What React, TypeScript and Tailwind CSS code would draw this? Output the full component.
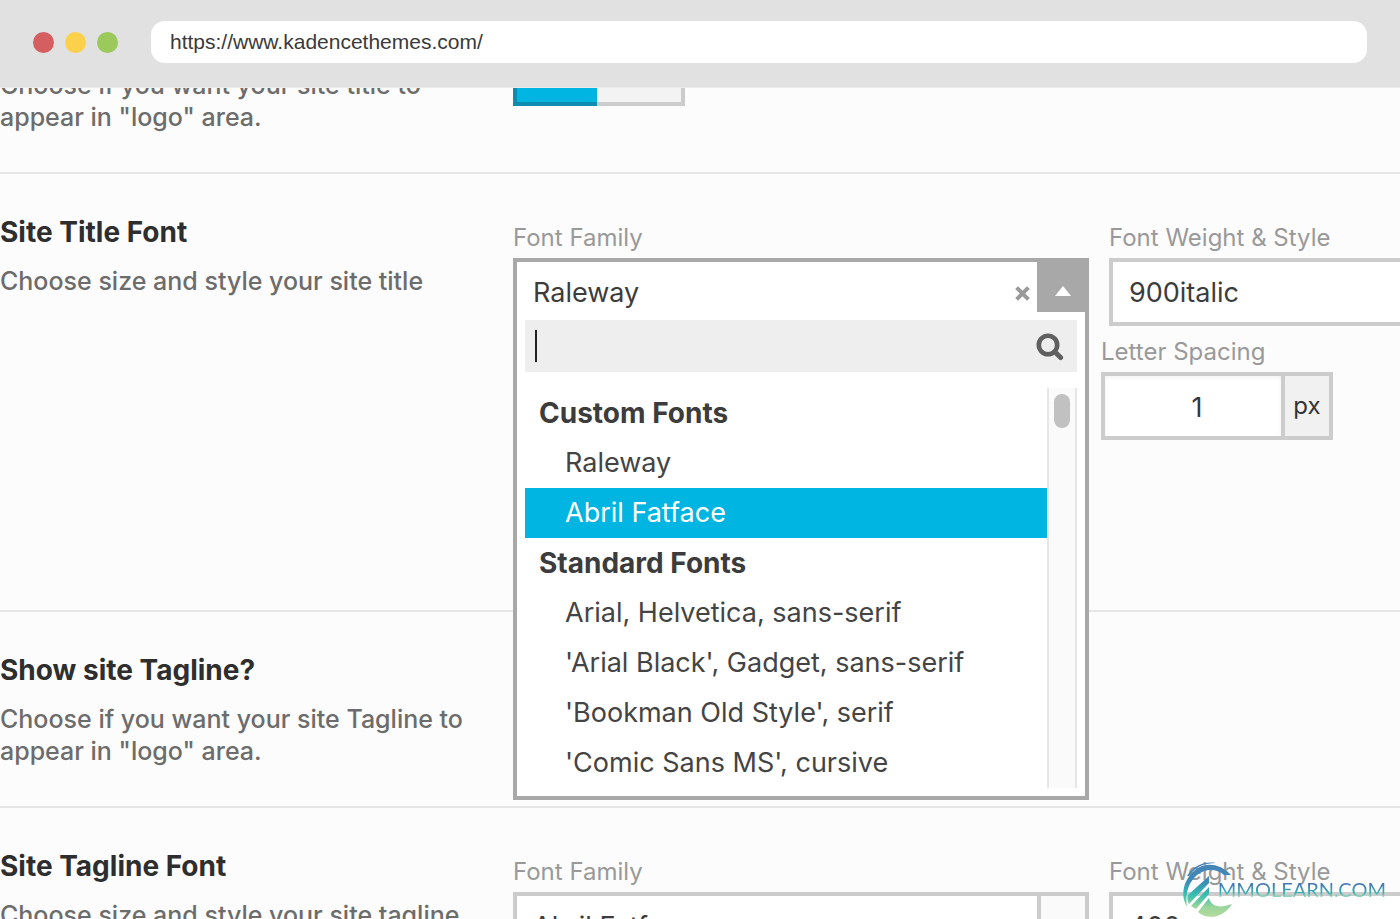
import React, { useState } from "react";
import type { ReactNode } from "react";

interface FontGroup {
    label: string;
    fonts: string[];
}

interface SettingRowProps {
    readonly title: string;
    readonly description: string;
    readonly className?: string;
    readonly children?: ReactNode;
}

const FONT_GROUPS: FontGroup[] = [
    { label: "Custom Fonts", fonts: ["Raleway", "Abril Fatface"] },
    {
        label: "Standard Fonts",
        fonts: [
            "Arial, Helvetica, sans-serif",
            "'Arial Black', Gadget, sans-serif",
            "'Bookman Old Style', serif",
            "'Comic Sans MS', cursive",
        ],
    },
];

const labelClass = "block whitespace-nowrap text-2xl leading-10 text-[#999999]";
const selectClass =
    "block h-17 w-full appearance-none border-4 border-[#cccccc] bg-white px-4 pt-0.5 text-[27px] text-[#3c3c3c] outline-none";

function BrowserBar() {
    return (
        <header className="relative z-20 flex h-[88px] shrink-0 items-center border-b border-[#ececec] bg-[#e1e1e1] px-[33px] pb-[3px]">
            <div className="mr-[33px] flex shrink-0 gap-[11px]">
                <span className="size-[21px] rounded-full bg-[#d45e60]" />
                <span className="size-[21px] rounded-full bg-[#fbd04b]" />
                <span className="size-[21px] rounded-full bg-[#9bc95b]" />
            </div>
            <input
                type="text"
                aria-label="Address"
                defaultValue="https://www.kadencethemes.com/"
                className="h-[42px] min-w-0 flex-1 rounded-[14px] bg-white px-[19px] font-['Liberation_Sans',sans-serif] text-[21px] text-[#3a3a3a] outline-none"
            />
        </header>
    );
}

function SettingRow({ title, description, className = "", children }: SettingRowProps) {
    return (
        <section className={`flex shrink-0 border-b-2 border-[#e5e5e5] ${className}`}>
            <div className="w-[513px] shrink-0 pt-10 pr-8 pb-[39px]">
                <h2 className="text-[28px] leading-9 font-bold text-[#2e2e2e]">{title}</h2>
                <p className="mt-[15px] text-[25px] leading-8 font-medium text-[#6c6c6c]">{description}</p>
            </div>
            {children}
        </section>
    );
}

function Toggle() {
    return (
        <div className="mt-[66px] flex h-[62px] w-[172px] shrink-0 self-start">
            <button type="button" aria-label="On" className="w-[84px] border-4 border-r-0 border-[#0f8db0] bg-[#00b5e2]" />
            <button type="button" aria-label="Off" className="w-[88px] border-4 border-l-0 border-[#cccccc] bg-[#f3f3f3]" />
        </div>
    );
}

function FontPicker() {
    const [value, setValue] = useState("Raleway");
    const [active, setActive] = useState("Abril Fatface");
    const [query, setQuery] = useState("");

    return (
        <div className="absolute inset-x-0 top-0 z-10 border-4 border-[#a8a8a8] bg-white">
            <div className="flex h-[50px] items-center">
                <span className="flex-1 pt-3 pl-4 text-[27px] text-[#3c3c3c]">{value}</span>
                <button type="button" aria-label="Clear font" onClick={() => setValue("")} className="mt-3 mr-[7px]">
                    <svg width="15" height="15" viewBox="0 0 15 15" className="stroke-[#999999]" strokeWidth="4">
                        <path d="M1.6 1.6 13.4 13.4M13.4 1.6 1.6 13.4" />
                    </svg>
                </button>
                <button type="button" aria-label="Close list" className="flex h-full w-12 items-center justify-center bg-[#a8a8a8] pt-2 pl-1">
                    <svg width="16" height="10" viewBox="0 0 16 10" className="fill-white">
                        <path d="M8 0 16 10H0Z" />
                    </svg>
                </button>
            </div>
            <div className="relative mx-2 mt-2 h-13 bg-[#eeeeee]">
                <input
                    type="text"
                    aria-label="Search fonts"
                    value={query}
                    onChange={(e) => setQuery(e.target.value)}
                    className="h-full w-full px-[10px] text-[27px] caret-transparent outline-none"
                />
                <span className="absolute top-[10px] left-[10px] h-8 w-0.5 bg-[#222222]" />
                <svg width="28" height="28" viewBox="0 0 28 28" fill="none" className="absolute top-[13px] right-[13px] stroke-[#606060]">
                    <circle cx="12" cy="12" r="9.2" strokeWidth="4.6" />
                    <path d="M19 19 24.6 24.6" strokeWidth="5" strokeLinecap="round" />
                </svg>
            </div>
            <div className="mx-2 mt-4 mb-2 flex h-[400px]">
                <ul role="listbox" aria-label="Fonts" className="flex-1">
                    {FONT_GROUPS.map((group) => (
                        <li key={group.label} role="group" aria-label={group.label}>
                            <strong className="block pl-[14px] text-[28px] leading-[50px] font-bold text-[#3c3c3c]">{group.label}</strong>
                            <ul>
                                {group.fonts.map((font) => (
                                    <li
                                        key={font}
                                        role="option"
                                        aria-selected={font === active}
                                        onMouseEnter={() => setActive(font)}
                                        onClick={() => setValue(font)}
                                        className={`pl-10 text-[27px] leading-[50px] ${font === active ? "bg-[#00b5e2] text-white" : "text-[#444444]"}`}
                                    >
                                        {font}
                                    </li>
                                ))}
                            </ul>
                        </li>
                    ))}
                </ul>
                <div className="w-[30px] border-x-2 border-[#e6e6e6] bg-[#fafafa] pt-[6px]">
                    <div className="mx-auto h-[34px] w-4 rounded-full bg-[#c1c1c1]" />
                </div>
            </div>
        </div>
    );
}

function Watermark() {
    return (
        <div className="pointer-events-none absolute right-[14px] bottom-0 z-30 flex items-center">
            <svg width="52" height="58" viewBox="0 0 52 58" className="-mr-4">
                <defs>
                    <linearGradient id="mark" gradientUnits="userSpaceOnUse" x1="0" y1="0" x2="0" y2="58">
                        <stop offset="0" stopColor="#4a83b8" />
                        <stop offset="0.35" stopColor="#3a8ab6" />
                        <stop offset="0.58" stopColor="#35bfb0" />
                        <stop offset="0.8" stopColor="#9bd69a" />
                        <stop offset="1" stopColor="#b9dca0" />
                    </linearGradient>
                </defs>
                <g fill="url(#mark)">
                    <path d="M49 14C38 2 23 1 13 9C1 19-2 35 5 46C3 33 6 22 15 14C24 7 35 8 42 14Z" />
                    <path d="M5 15C11 5 22 0 34 2C23 2 14 5 7 15Z" />
                    <path d="M27 15 27 22 7 43C5 40 5 36 6 34Z" />
                    <path d="M27 26 27 33 14 48 9 45Z" />
                    <path d="M27 37C29 45 37 48 50 43C42 56 27 60 16 51Z" />
                </g>
            </svg>
            <span className="bg-linear-to-b from-[#4474b4] from-30% via-[#35b5b4] via-60% to-[#c4e6b4] to-80% bg-clip-text pb-0.5 font-['Lato',sans-serif] text-xl leading-7 text-transparent">
                MMOLEARN.COM
            </span>
        </div>
    );
}

export default function App() {
    return (
        <div className="relative flex h-screen flex-col overflow-hidden bg-[#fcfcfc] font-['Inter',sans-serif]">
            <BrowserBar />
            <main className="flex min-h-0 flex-1 flex-col">
                <SettingRow
                    title="Show site Title?"
                    description={'Choose if you want your site title to appear in "logo" area.'}
                    className="-mt-[110px]"
                >
                    <Toggle />
                </SettingRow>

                <SettingRow title="Site Title Font" description="Choose size and style your site title" className="min-h-[438px]">
                    <div className="w-[576px] shrink-0 pt-11">
                        <span className={labelClass}>Font Family</span>
                        <div className="relative">
                            <FontPicker />
                        </div>
                    </div>
                    <div className="ml-3 min-w-0 flex-1 pt-11">
                        <div className="ml-2">
                            <label htmlFor="title-weight" className={labelClass}>Font Weight &amp; Style</label>
                            <div className="-mr-10">
                                <select id="title-weight" className={selectClass}>
                                    <option>900italic</option>
                                </select>
                            </div>
                        </div>
                        <label htmlFor="title-spacing" className={`mt-[6px] ${labelClass}`}>Letter Spacing</label>
                        <div className="flex h-17 w-[232px] border-4 border-[#cccccc]">
                            <input
                                id="title-spacing"
                                type="text"
                                defaultValue="1"
                                className="min-w-0 flex-1 bg-white pt-1 pl-2 text-center text-[27px] text-[#32373c] inset-shadow-sm outline-none"
                            />
                            <span className="flex w-12 items-center justify-center border-l-4 border-[#cccccc] bg-[#f1f1f1] text-2xl text-[#333333]">px</span>
                        </div>
                    </div>
                </SettingRow>

                <SettingRow
                    title="Show site Tagline?"
                    description={'Choose if you want your site Tagline to appear in "logo" area.'}
                />

                <SettingRow title="Site Tagline Font" description="Choose size and style your site tagline">
                    <div className="w-[576px] shrink-0 pt-11">
                        <label htmlFor="tagline-font" className={labelClass}>Font Family</label>
                        <div className="flex">
                            <select id="tagline-font" className={`${selectClass} border-r-0`}>
                                <option>Abril Fatface</option>
                            </select>
                            <span className="w-13 shrink-0 border-4 border-[#cccccc] bg-[#fafafa]" />
                        </div>
                    </div>
                    <div className="ml-5 min-w-0 flex-1 pt-11">
                        <label htmlFor="tagline-weight" className={labelClass}>Font Weight &amp; Style</label>
                        <div className="-mr-10">
                            <select id="tagline-weight" className={selectClass}>
                                <option>400</option>
                            </select>
                        </div>
                    </div>
                </SettingRow>
            </main>
            <Watermark />
        </div>
    );
}
